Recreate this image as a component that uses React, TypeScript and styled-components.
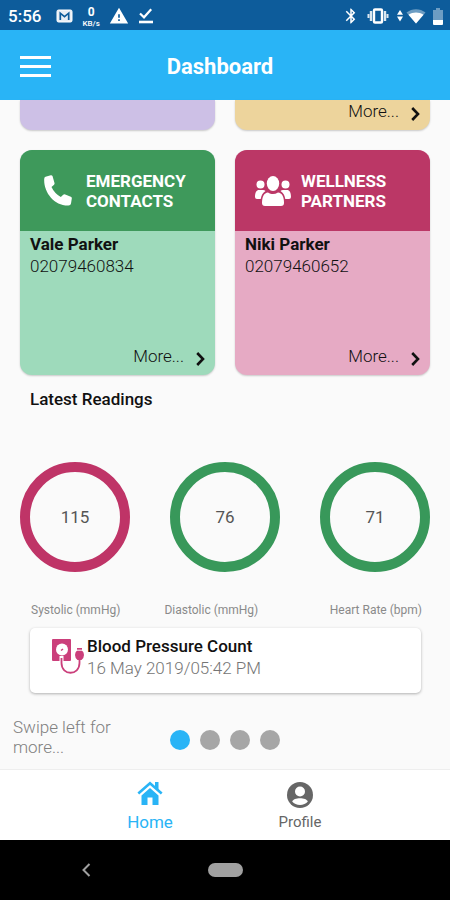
import React from "react";
import styled, { createGlobalStyle } from "styled-components";
import { MdBluetooth, MdWarning } from "react-icons/md";

const GlobalStyle = createGlobalStyle`
  * {
    box-sizing: border-box;
  }

  body {
    margin: 0;
    background: #fafafa;
    font-family: Roboto, "Liberation Sans", sans-serif;
  }

  button {
    padding: 0;
    border: 0;
    background: none;
    font: inherit;
    color: inherit;
    cursor: pointer;
  }

  h1, h2, h3, p {
    margin: 0;
  }

  svg {
    display: block;
  }
`;

const Page = styled.div`
  display: flex;
  flex-direction: column;
  min-height: 100vh;
`;

const StatusBar = styled.div`
  display: flex;
  align-items: center;
  justify-content: space-between;
  height: 30px;
  padding: 2px 7px 0 8px;
  background: #0d5c9b;
  color: #ffffff;
`;

const StatusGroup = styled.div<{ $gap: number }>`
  display: flex;
  align-items: center;
  gap: ${({ $gap }) => $gap}px;
`;

const Clock = styled.span`
  margin-right: 6px;
  font-size: 17px;
  font-weight: 500;
`;

const NetSpeed = styled.span`
  display: flex;
  flex-direction: column;
  align-items: center;
  font-size: 8px;
  font-weight: 500;
  line-height: 9px;
`;

const NetSpeedValue = styled.b`
  font-size: 12px;
  line-height: 14px;
`;

const AppBar = styled.header`
  display: grid;
  grid-template-columns: 1fr auto 1fr;
  align-items: center;
  height: 70px;
  padding: 4px 20px 0;
  background: #29b4f6;
  color: #ffffff;
`;

const MenuButton = styled.button`
  justify-self: start;
  padding-bottom: 2px;
`;

const AppBarTitle = styled.h1`
  padding-right: 10px;
  font-size: 22px;
  font-weight: 700;
  line-height: 28px;
`;

const Content = styled.main`
  flex: 1;
`;

const CardGrid = styled.div`
  display: grid;
  grid-template-columns: 1fr 1fr;
  gap: 20px;
  padding: 0 20px;
`;

const Card = styled.section<{ $color: string }>`
  display: flex;
  flex-direction: column;
  height: 225px;
  border-radius: 12px;
  overflow: hidden;
  background: ${({ $color }) => $color};
  box-shadow: 0 1px 2px rgba(0, 0, 0, 0.2);
`;

const CardTail = styled(Card)`
  height: 30px;
  border-radius: 0 0 12px 12px;
`;

const CardHeader = styled.div<{ $color: string }>`
  display: flex;
  align-items: center;
  height: 81px;
  background: ${({ $color }) => $color};
  color: #ffffff;
`;

const CardIcon = styled.span`
  display: flex;
  justify-content: center;
  width: 66px;
  padding-left: 10px;
`;

const CardTitle = styled.h2`
  flex: 1;
  max-width: 120px;
  font-size: 17px;
  font-weight: 700;
  line-height: 20px;
  text-transform: uppercase;
`;

const CardBody = styled.div`
  padding: 2px 10px;
  color: #111111;
`;

const ContactName = styled.h3`
  font-size: 17px;
  font-weight: 700;
  line-height: 22px;
`;

const ContactPhone = styled.p`
  font-size: 17px;
  font-weight: 300;
  line-height: 23px;
`;

const MoreButton = styled.button`
  display: flex;
  align-items: center;
  align-self: flex-end;
  gap: 12px;
  margin-top: auto;
  padding: 0 10px 9px 0;
  color: #111111;
  font-size: 17px;
  font-weight: 300;
  line-height: 20px;

  svg {
    margin-top: 5px;
  }
`;

const SectionTitle = styled.h2`
  padding: 14px 30px 0;
  color: #111111;
  font-size: 17px;
  font-weight: 500;
  line-height: 20px;
`;

const Rings = styled.div`
  display: flex;
  justify-content: space-between;
  padding: 53px 20px 0;
`;

const Ring = styled.div<{ $color: string }>`
  display: flex;
  align-items: center;
  justify-content: center;
  width: 110px;
  height: 110px;
  border: 10px solid ${({ $color }) => $color};
  border-radius: 50%;
  color: #555555;
  font-size: 17px;
`;

const RingLabels = styled.div`
  display: flex;
  gap: 44px;
  padding: 30px 28px 0 31px;
  color: #8a8a8a;
  font-size: 12px;
  line-height: 16px;

  span:last-child {
    margin-left: auto;
  }
`;

const ReadingCard = styled.section`
  display: flex;
  align-items: flex-start;
  gap: 3px;
  height: 65px;
  margin: 10px 29px 0 30px;
  padding: 7px 22px;
  border-radius: 5px;
  background: #ffffff;
  box-shadow: 0 1px 3px rgba(0, 0, 0, 0.3);

  svg {
    margin-top: 4px;
  }
`;

const ReadingTitle = styled.h3`
  color: #111111;
  font-size: 17px;
  font-weight: 500;
  line-height: 22px;
`;

const ReadingTime = styled.p`
  color: #757575;
  font-size: 17px;
  font-weight: 300;
  line-height: 22px;
`;

const Pager = styled.div`
  display: grid;
  grid-template-columns: 1fr auto 1fr;
  align-items: center;
  padding: 24px 13px 12px;
`;

const SwipeHint = styled.p`
  max-width: 120px;
  color: #808080;
  font-size: 17px;
  font-weight: 300;
  line-height: 20px;
`;

const Dots = styled.div`
  display: flex;
  gap: 10px;
  padding-top: 6px;
`;

const Dot = styled.button<{ $active?: boolean }>`
  width: 20px;
  height: 20px;
  border-radius: 50%;
  background: ${({ $active }) => ($active ? "#29b4f6" : "#a6a6a6")};
`;

const TabBar = styled.nav`
  display: flex;
  justify-content: center;
  height: 71px;
  border-top: 1px solid #eeeeee;
  background: #ffffff;
`;

const Tab = styled.a<{ $active?: boolean }>`
  display: flex;
  flex-direction: column;
  align-items: center;
  justify-content: flex-end;
  gap: ${({ $active }) => ($active ? 7 : 4)}px;
  width: calc(100% / 3);
  padding-bottom: 8px;
  color: ${({ $active }) => ($active ? "#29b4f6" : "#666666")};
  font-size: ${({ $active }) => ($active ? 17 : 15)}px;
  line-height: 20px;
  text-decoration: none;
`;

const SystemBar = styled.div`
  display: grid;
  grid-template-columns: 1fr auto 1fr;
  align-items: center;
  height: 60px;
  background: #000000;
  color: #a0a0a0;
`;

const BackButton = styled.button`
  justify-self: center;
  margin-right: 34px;
`;

const HomePill = styled.button`
  width: 35px;
  height: 14px;
  border-radius: 7px;
  background: #a0a0a0;
`;

function Chevron() {
  return (
    <svg width="9" height="14" viewBox="0 0 9 14" fill="none" stroke="#111111" strokeWidth="2.6">
      <path d="M1.2 1 7 7 1.2 13" />
    </svg>
  );
}

function MailIcon() {
  return (
    <svg width="17" height="14" viewBox="0 0 17 14" fill="none" stroke="#ffffff">
      <rect x="1" y="1" width="15" height="12" rx="1.5" fill="#e8eef5" />
      <path d="M4.3 11V4.2L8.5 7.6 12.7 4.2V11" stroke="#0d5c9b" strokeWidth="1.7" />
    </svg>
  );
}

function DoneIcon() {
  return (
    <svg width="16" height="16" viewBox="0 0 16 16" fill="none" stroke="#ffffff">
      <path d="M2 5.5 6 9.3 13.2 1.3" strokeWidth="2.2" />
      <path d="M1 14H15" strokeWidth="2.6" />
    </svg>
  );
}

function VibrateIcon() {
  return (
    <svg width="22" height="16" viewBox="0 0 22 16" fill="none" stroke="#ffffff">
      <rect x="7" y="1.5" width="8" height="13" rx="1" strokeWidth="2.4" />
      <path d="M4 3V13M18 3V13" strokeWidth="2.4" opacity="0.85" />
      <path d="M1.5 6V10M20.5 6V10" strokeWidth="2" opacity="0.85" />
    </svg>
  );
}

function WifiIcon() {
  return (
    <svg width="30" height="16" viewBox="0 0 30 16" fill="#ffffff">
      <path d="M1 6.7 4 2 7 6.7ZM1 8.5H7L4 13.5Z" />
      <path d="M10.5 4.5C16 0 24 0 29.5 4.5L20 15.5Z" opacity="0.4" />
      <path d="M12.5 6.8C17 3.6 23 3.6 27.5 6.8L20 15.5Z" />
    </svg>
  );
}

function BatteryIcon() {
  return (
    <svg width="10" height="17" viewBox="0 0 10 17" fill="#ffffff">
      <path d="M0 2H3V0H7V2H10V12H0Z" opacity="0.4" />
      <path d="M0 12H10V16Q10 17 9 17H1Q0 17 0 16Z" />
    </svg>
  );
}

function PhoneIcon() {
  return (
    <svg width="28" height="31" viewBox="0 0 28 31" fill="#ffffff">
      <path d="M1.5 1.8 6.800 0.200Q8 0 8.500 1L10.500 8Q10.800 9.200 9.800 10L7.500 12Q10.500 18.500 16.800 22L19.200 19.800Q20 19 21.200 19.500L26.800 21.800Q28 22.300 27.800 23.500L27 28.500Q26.700 30.500 24.500 30.500C10.500 31 -0.500 17.500 0.200 4Q0.200 2.300 1.500 1.800Z" />
    </svg>
  );
}

function GroupIcon() {
  return (
    <svg width="36" height="30" viewBox="0 0 36 30" fill="#ffffff">
      <ellipse cx="18" cy="7.5" rx="6.2" ry="7.5" />
      <circle cx="5.5" cy="8.5" r="4" />
      <circle cx="30.5" cy="8.5" r="4" />
      <path d="M7 27C7 20.500 9 17 13 16.500 16.500 18.500 19.500 18.500 23 16.500 27 17 29 20.500 29 27Q29 30 26 30H10Q7 30 7 27Z" />
      <path d="M0 21C0 16.500 1.500 14 4 14H8Q9.500 14 10.500 15 6.500 17.500 5.700 23H2Q0 23 0 21Z" />
      <path d="M36 21C36 16.500 34.500 14 32 14H28Q26.500 14 25.500 15 29.500 17.500 30.300 23H34Q36 23 36 21Z" />
    </svg>
  );
}

function HomeIcon() {
  return (
    <svg width="26" height="24" viewBox="0 0 26 24" fill="currentColor">
      <path d="M4.500 14.500 13 7 21.500 14.500V24H15.500V16.500H10.500V24H4.500Z" />
      <path d="M18 1H21.500V10L18 7Z" />
      <path d="M1.300 12.500 13 2.200 24.700 12.500" fill="none" stroke="currentColor" strokeWidth="2.6" />
    </svg>
  );
}

function ProfileIcon() {
  return (
    <svg width="26" height="26" viewBox="0 0 26 26" fill="#ffffff">
      <circle cx="13" cy="13" r="13" fill="currentColor" />
      <circle cx="13" cy="9.500" r="5" />
      <path d="M5.200 19.500C6.500 15 19.500 15 20.800 19.500 17.500 24 8.500 24 5.200 19.500Z" />
    </svg>
  );
}

function MonitorIcon() {
  return (
    <svg width="32" height="36" viewBox="0 0 32 36" fill="none">
      <rect x="0" y="0" width="19" height="22" rx="1" fill="#cb3f7b" />
      <circle cx="10" cy="10.5" r="6" fill="#ffffff" />
      <path d="M9 11.500 11 10" stroke="#cb3f7b" strokeWidth="1.5" />
      <path d="M9.500 17V24C9.500 37 27.500 37 27.500 24" stroke="#ffffff" strokeWidth="4" />
      <path d="M9.500 19V24C9.500 37 27.500 37 27.500 24V20" stroke="#cb3f7b" strokeWidth="1.8" />
      <path d="M25 9H30V11.500Q32 13 32 16 32 19 29.500 21H25.500Q23 19 23 16 23 13 25 11.500Z" fill="#cb3f7b" />
      <path d="M24 11.200H31" stroke="#ffffff" />
    </svg>
  );
}

function ContactCard({ title, icon, name, phone, dark, light }: any) {
  return (
    <Card $color={light}>
      <CardHeader $color={dark}>
        <CardIcon>{icon}</CardIcon>
        <CardTitle>{title}</CardTitle>
      </CardHeader>
      <CardBody>
        <ContactName>{name}</ContactName>
        <ContactPhone>{phone}</ContactPhone>
      </CardBody>
      <MoreButton>
        More...
        <Chevron />
      </MoreButton>
    </Card>
  );
}

function App() {
  return (
    <Page>
      <GlobalStyle />
      <StatusBar>
        <StatusGroup $gap={9}>
          <Clock>5:56</Clock>
          <MailIcon />
          <NetSpeed>
            <NetSpeedValue>0</NetSpeedValue>
            <span>KB/s</span>
          </NetSpeed>
          <MdWarning size={20} />
          <DoneIcon />
        </StatusGroup>
        <StatusGroup $gap={7}>
          <MdBluetooth size={18} />
          <VibrateIcon />
          <WifiIcon />
          <BatteryIcon />
        </StatusGroup>
      </StatusBar>

      <AppBar>
        <MenuButton aria-label="Menu">
          <svg width="31" height="21" viewBox="0 0 31 21" fill="#ffffff">
            <path d="M0 0H31V3H0ZM0 9H31V12H0ZM0 18H31V21H0Z" />
          </svg>
        </MenuButton>
        <AppBarTitle>Dashboard</AppBarTitle>
      </AppBar>

      <Content>
        <CardGrid>
          <CardTail $color="#cdc0e6" />
          <CardTail $color="#edd49c">
            <MoreButton>
              More...
              <Chevron />
            </MoreButton>
          </CardTail>
          <ContactCard
            title="Emergency Contacts"
            icon={<PhoneIcon />}
            name="Vale Parker"
            phone="02079460834"
            dark="#3e995b"
            light="#9edabb"
          />
          <ContactCard
            title="Wellness Partners"
            icon={<GroupIcon />}
            name="Niki Parker"
            phone="02079460652"
            dark="#bb3766"
            light="#e6aac4"
          />
        </CardGrid>

        <SectionTitle>Latest Readings</SectionTitle>
        <Rings>
          <Ring $color="#bf3467">115</Ring>
          <Ring $color="#38985a">76</Ring>
          <Ring $color="#38985a">71</Ring>
        </Rings>
        <RingLabels>
          <span>Systolic (mmHg)</span>
          <span>Diastolic (mmHg)</span>
          <span>Heart Rate (bpm)</span>
        </RingLabels>

        <ReadingCard>
          <MonitorIcon />
          <div>
            <ReadingTitle>Blood Pressure Count</ReadingTitle>
            <ReadingTime>16 May 2019/05:42 PM</ReadingTime>
          </div>
        </ReadingCard>

        <Pager>
          <SwipeHint>Swipe left for more...</SwipeHint>
          <Dots>
            <Dot $active aria-label="Page 1" />
            <Dot aria-label="Page 2" />
            <Dot aria-label="Page 3" />
            <Dot aria-label="Page 4" />
          </Dots>
        </Pager>
      </Content>

      <TabBar>
        <Tab href="#home" $active>
          <HomeIcon />
          Home
        </Tab>
        <Tab href="#profile">
          <ProfileIcon />
          Profile
        </Tab>
      </TabBar>

      <SystemBar>
        <BackButton aria-label="Back">
          <svg width="9" height="14" viewBox="0 0 9 14" fill="none" stroke="currentColor" strokeWidth="2">
            <path d="M7.5 1 1.5 7 7.5 13" />
          </svg>
        </BackButton>
        <HomePill aria-label="Home screen" />
      </SystemBar>
    </Page>
  );
}

export default App;
